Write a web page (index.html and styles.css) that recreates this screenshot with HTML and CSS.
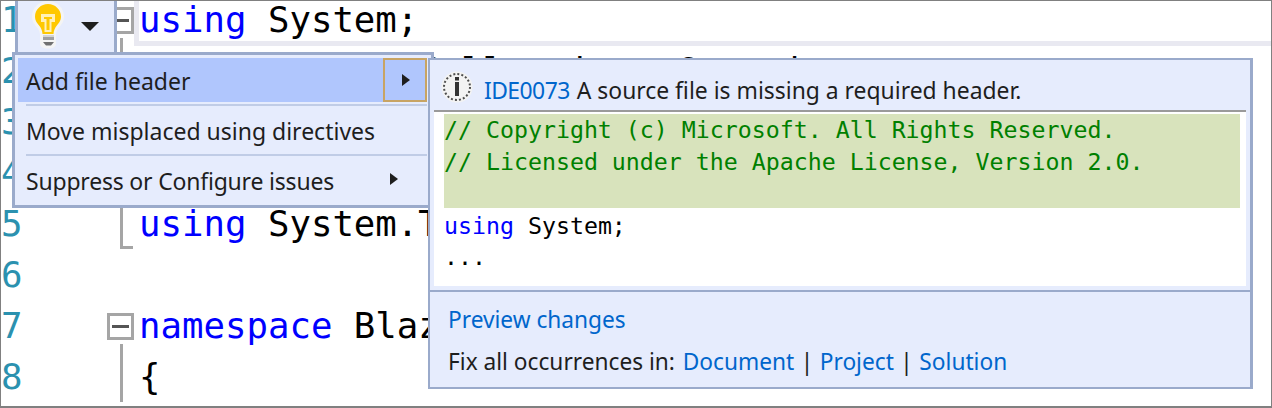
FILE: index.html
```html
<!DOCTYPE html>
<html lang="en">
<head>
<meta charset="utf-8">
<title>Add file header</title>
<link rel="stylesheet" href="styles.css">
</head>
<body>
<main class="editor">
  <div class="current-line"></div>
  <div class="code">
    <div class="row"><span class="num">1</span><span class="fold"><span class="box"></span><span class="rail"></span></span><span class="src"><b>using</b> System;</span></div>
    <div class="row"><span class="num">2</span><span class="fold"><span class="rail full"></span></span><span class="src"><b>using</b> System.Collections.Generic;</span></div>
    <div class="row"><span class="num">3</span><span class="fold"><span class="rail full"></span></span><span class="src"><b>using</b> System.Linq;</span></div>
    <div class="row"><span class="num">4</span><span class="fold"><span class="rail full"></span></span><span class="src"><b>using</b> System.Threading;</span></div>
    <div class="row"><span class="num">5</span><span class="fold"><span class="end"></span></span><span class="src"><b>using</b> System.Threading.Tasks;</span></div>
    <div class="row"><span class="num">6</span><span class="fold"></span><span class="src"></span></div>
    <div class="row"><span class="num">7</span><span class="fold"><span class="box"></span><span class="rail"></span></span><span class="src"><b>namespace</b> BlazorApp</span></div>
    <div class="row"><span class="num">8</span><span class="fold"><span class="rail full"></span></span><span class="src">{</span></div>
  </div>

  <div class="bulb-btn">
    <svg class="bulb" width="32" height="48" viewBox="0 0 32 48" aria-hidden="true">
      <path d="M16 0C7 0 0 7 0 15.500c0 5.500 3 8.500 5 11 1.500 2 3 4 3 7v9c0 3 3 5 8 5s8-2 8-5v-9c0-3 1.500-5 3-7 2-2.500 5-5.500 5-11C32 7 25 0 16 0z" fill="#f4f4f4"/>
      <path d="M16 3C9 3 3 8.500 3 15.500c0 4.500 2.500 7 4.500 9.500 1.500 2 2.800 4.500 3 8h11c.2-3.500 1.500-6 3-8 2-2.500 4.500-5 4.500-9.500C29 8.500 23 3 16 3z" fill="#ffc800"/>
      <path d="M9 13h14v8h-3.500v10h-7V21H9z" fill="#fff0b8"/>
      <path d="M12 16h8v2h-2.500v11h-3V18H12z" fill="#ffc800"/>
      <rect x="11" y="34" width="11" height="2" fill="#d4d4d4"/>
      <rect x="11" y="36" width="11" height="3" fill="#a0a0a0"/>
      <path d="M11 41h11l-3 3.500h-5z" fill="#707070"/>
    </svg>
    <span class="caret"></span>
  </div>

  <section class="menu">
    <div class="item first"><span class="label">Add file header</span><span class="sub"><i class="arrow"></i></span></div>
    <div class="sep"></div>
    <div class="item"><span class="label">Move misplaced using directives</span></div>
    <div class="sep"></div>
    <div class="item"><span class="label tight">Suppress or Configure issues</span><i class="arrow low"></i></div>
  </section>

  <section class="preview">
    <header class="head">
      <svg class="info" width="32" height="32" viewBox="0 0 32 32" aria-hidden="true">
        <circle cx="16" cy="16" r="15.500" fill="#f3f3f3"/>
        <circle cx="16" cy="16" r="13" fill="none" stroke="#4d4d4d" stroke-width="2" stroke-dasharray="2 2.080"/>
        <rect x="14" y="11" width="4" height="14" fill="#333"/>
        <rect x="14" y="6" width="4" height="3.500" fill="#333"/>
      </svg>
      <a class="link id">IDE0073</a>
      <span>A source file is missing a required header.</span>
    </header>
    <div class="body">
      <div class="added">
        <div>// Copyright (c) Microsoft. All Rights Reserved.</div>
        <div>// Licensed under the Apache License, Version 2.0.</div>
      </div>
      <div class="plain"><b>using</b> System;</div>
      <div class="plain">...</div>
    </div>
    <footer class="foot">
      <div><a class="link">Preview changes</a></div>
      <div class="fix">Fix all occurrences in: <a class="link doc">Document</a><span class="pipe">|</span><a class="link">Project</a><span class="pipe">|</span><a class="link">Solution</a></div>
    </footer>
  </section>
</main>
</body>
</html>
```
FILE: styles.css
```css
* { box-sizing: border-box; }
html, body { margin: 0; padding: 0; background: #fff; }
.editor {
  position: relative;
  width: 1272px;
  height: 408px;
  overflow: hidden;
  background: #fff;
  border: 1px solid #808080;
  border-bottom-width: 2px;
  font-family: "Noto Sans", sans-serif;
}
.current-line {
  position: absolute;
  left: 133px; top: 0; right: 0; height: 45px;
  border-left: 5px solid #e9e9f1;
  border-bottom: 5px solid #e9e9f1;
}
.code {
  position: relative;
  display: flex;
  flex-direction: column;
  margin-top: -7px;
  font: 35.7px/51px "DejaVu Sans Mono", monospace;
  color: #000;
}
.row { display: flex; height: 51px; flex: none; }
.num { width: 106px; color: #2b91af; flex: none; }
.fold { width: 33px; flex: none; display: flex; flex-direction: column; align-items: flex-start; }
.src { white-space: pre; margin-left: -1px; }
.src b { font-weight: 400; color: #0000ff; }
.box {
  flex: none;
  position: relative;
  width: 27px; height: 27px;
  margin-top: 13px;
  background: #fff;
  border: 3px solid #a5a5a5;
}
.box::after {
  content: "";
  position: absolute;
  left: 2px; right: 2px; top: 9px; height: 3px;
  background: #555;
}
.rail { flex: 1; margin: 4px 0 0 13px; width: 3px; background: #a5a5a5; }
.rail.full { margin-top: 0; }
.end {
  width: 13px; height: 51px;
  margin-left: 13px;
  border-left: 3px solid #a5a5a5;
  border-bottom: 3px solid #a5a5a5;
}
.bulb-btn {
  position: absolute;
  left: 14px; top: -1px;
  width: 102px; height: 56px;
  background: #e6ecfd;
  border: solid #9aaacb;
  border-width: 0 3px;
  display: flex;
  align-items: flex-start;
}
.bulb { margin: 1px 0 0 14px; flex: none; }
.caret {
  margin: 22px 0 0 17px;
  width: 0; height: 0;
  border: solid transparent;
  border-width: 9px 9px 0;
  border-top-color: #1e1e1e;
}
.menu {
  position: absolute;
  left: 11px; top: 51px;
  width: 422px; height: 156px;
  background: #e6ecfd;
  border: 3px solid #9aaacb;
  padding: 3px 4px 0 3px;
  display: flex;
  flex-direction: column;
  color: #1e1e1e;
  font-size: 23px;
}
.item { height: 48px; flex: none; display: flex; align-items: center; padding: 2px 0 0 8px; }
.item.first { height: 44px; background: #b0c6fd; padding: 0 0 0 8px; }
.label { flex: 1; white-space: nowrap; }
.item.first .label { padding-top: 2px; }
.tight { letter-spacing: -0.2px; }
.sub {
  width: 44px; height: 44px;
  flex: none;
  border: 2px solid #c8a464;
  display: flex; align-items: center; justify-content: center;
  padding-left: 2px;
}
.arrow {
  width: 0; height: 0;
  border: solid transparent;
  border-width: 6.500px 0 6.500px 8px;
  border-left-color: #1e1e1e;
}
.arrow.low { margin: -4px 29px 0 0; }
.sep { height: 2px; margin: 2px 0 0 8px; background: #c0cce6; flex: none; }
.sep ~ .sep { margin-top: 0; }
.preview {
  position: absolute;
  left: 427px; top: 57px;
  width: 825px; height: 331px;
  background: #e6ecfd;
  border: 2px solid #9aaacb;
  border-right-width: 3px;
  display: flex;
  flex-direction: column;
  color: #1e1e1e;
  font-size: 22.9px;
}
.head {
  height: 50px; flex: none;
  display: flex; align-items: center;
  padding: 10px 0 0 11px;
  white-space: pre;
}
.info { flex: none; margin: -6px 11px 0 0; }
.link { color: #0066cc; }
.id { margin-right: 7px; letter-spacing: -0.55px; }
.body {
  flex: none;
  height: 176px;
  margin: 0 4px;
  background: #fff;
  border-top: 2px solid #9a9a9a;
  padding: 2px 6px 0 10px;
  font: 23.24px/32px "DejaVu Sans Mono", monospace;
  color: #000;
}
.added { height: 94px; background: #d8e3bc; color: #008000; margin-bottom: 2px; }
.added div { white-space: pre; }
.plain { white-space: pre; line-height: 31px; }
.plain b { font-weight: 400; color: #0000ff; }
.foot {
  flex: 1;
  margin-top: 4px;
  border-top: 2px solid #9aaacb;
  padding: 12px 0 0 18px;
  display: flex; flex-direction: column; gap: 10px;
  line-height: 32px;
  font-size: 22.7px;
}
.doc { margin-left: 2px; }
.pipe { margin: 0 6.500px; }
```
